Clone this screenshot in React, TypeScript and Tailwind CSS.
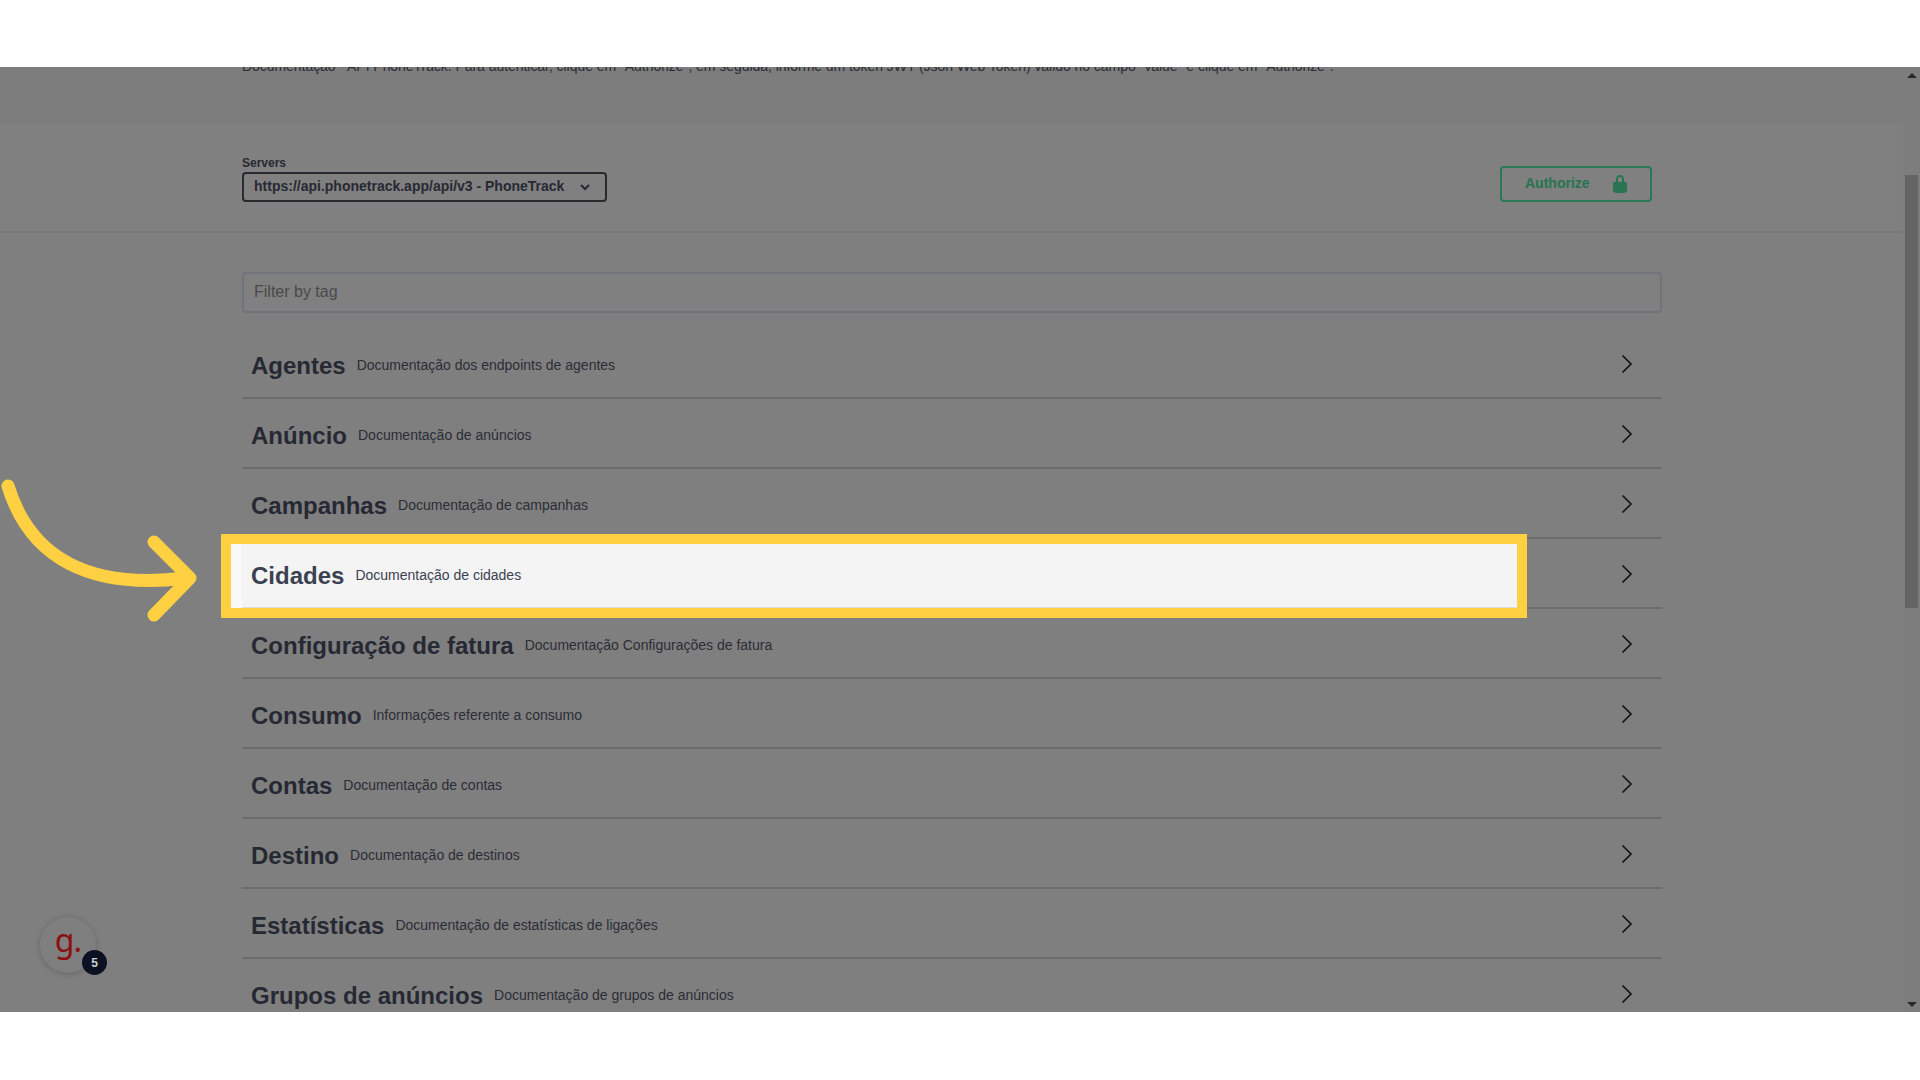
const tags = [
  { name: "Agentes", desc: "Documentação dos endpoints de agentes" },
  { name: "Anúncio", desc: "Documentação de anúncios" },
  { name: "Campanhas", desc: "Documentação de campanhas" },
  { name: "Cidades", desc: "Documentação de cidades", highlight: true },
  { name: "Configuração de fatura", desc: "Documentação Configurações de fatura" },
  { name: "Consumo", desc: "Informações referente a consumo" },
  { name: "Contas", desc: "Documentação de contas" },
  { name: "Destino", desc: "Documentação de destinos" },
  { name: "Estatísticas", desc: "Documentação de estatísticas de ligações" },
  { name: "Grupos de anúncios", desc: "Documentação de grupos de anúncios" },
];

function Chevron() {
  return (
    <svg width="12" height="20" viewBox="0 0 12 20" fill="none" className="mb-[3px] shrink-0">
      <path d="M1.5 1.5L10 10L1.5 18.5" stroke="#111" strokeWidth="1.6" />
    </svg>
  );
}

function TagTitle({ name, desc, bright }: { name: string; desc: string; bright?: boolean }) {
  return (
    <div className="flex items-center pl-[9px]">
      <span className={`text-[24px] font-bold leading-none ${bright ? "text-[#3b4151]" : "text-[#262933]"}`}>{name}</span>
      <span className={`ml-[11px] text-[14px] ${bright ? "text-[#3b4151]" : "text-[#2b2d36]"}`}>{desc}</span>
    </div>
  );
}

function TagRow({ name, desc, highlight }: { name: string; desc: string; highlight?: boolean }) {
  return (
    <div className="relative flex h-[70px] shrink-0 items-center justify-between border-b-2 border-[#6d6d6d] pt-[5px] pr-[29px]">
      {highlight ? <div /> : <TagTitle name={name} desc={desc} />}
      <Chevron />
      {highlight && (
        <div className="absolute left-[-21px] top-[-5px] flex h-[84px] w-[1306px] border-[10px] border-[#ffd041] bg-[#f4f4f4]">
          <div className="h-full w-[11px] bg-[#f9f9f9]" />
          <div className="flex flex-1 items-center border-b border-[#dcdcdc]">
            <TagTitle name={name} desc={desc} bright />
          </div>
        </div>
      )}
    </div>
  );
}

export default function App() {
  return (
    <div className="flex h-screen w-full flex-col overflow-hidden bg-white font-['Liberation_Sans',Arial,sans-serif]">
      <div className="h-[67px] shrink-0 bg-white" />

      <div className="relative flex min-h-0 flex-1 overflow-hidden bg-[#7f7f7f]">
        <div className="flex min-w-0 flex-1 flex-col">
          <div className="h-[56px] shrink-0 bg-[#7d7d7d] pl-[242px]">
            <p className="-mt-[9px] text-[14px] leading-[16px] tracking-[-0.05px] whitespace-nowrap text-[#2b2d36]">
              Documentação - API PhoneTrack. Para autenticar, clique em "Authorize", em seguida, informe um token JWT (Json Web Token) válido no campo "value" e clique em "Authorize".
            </p>
          </div>

          <div className="flex h-[110px] shrink-0 items-start justify-between border-b-2 border-[#787878] bg-[#808080] pl-[242px] pr-[251px]">
            <div className="pt-[33px]">
              <div className="text-[12px] leading-[14px] font-bold text-[#262933]">Servers</div>
              <div className="mt-[2px] flex h-[30px] w-[365px] items-center justify-between rounded-[4px] border-2 border-[#2a2a2e] pb-[1px] pl-[10px] pr-[14px]">
                <span className="text-[14px] font-bold whitespace-nowrap text-[#262933]">https://api.phonetrack.app/api/v3 - PhoneTrack</span>
                <svg width="12" height="12" viewBox="0 0 12 12" fill="none">
                  <path d="M2 4L6 8L10 4" stroke="#262933" strokeWidth="2" />
                </svg>
              </div>
            </div>
            <div className="mt-[43px] flex h-[36px] w-[152px] items-center justify-between rounded-[4px] border-2 border-[#277a54] pb-[1px] pl-[23px] pr-[20px]">
              <span className="text-[14px] font-bold text-[#267450]">Authorize</span>
              <svg width="20" height="20" viewBox="0 0 20 20" fill="#267450">
                <path d="M15.8 8H14V5.6C14 2.703 12.665 1 10 1 7.334 1 6 2.703 6 5.6V8H4c-.553 0-1 .646-1 1.199V17c0 .549.428 1.139.951 1.307l1.197.387C5.672 18.861 6.55 19 7.1 19h5.8c.549 0 1.428-.139 1.951-.307l1.196-.387c.524-.167.953-.757.953-1.306V9.199C17 8.646 16.352 8 15.8 8zM12 8H8V5.199C8 3.754 8.797 3 10 3c1.203 0 2 .754 2 2.199V8z" />
              </svg>
            </div>
          </div>

          <div className="ml-[242px] flex w-[1420px] flex-col pt-[39px]">
            <div className="flex h-[41px] items-center rounded-[4px] border-2 border-[#70747a] bg-[#808080] pb-[2px] pl-[10px] text-[16px] text-[#4a4a4a]">
              Filter by tag
            </div>
            <div className="mt-[16px] flex flex-col">
              {tags.map((t) => (
                <TagRow key={t.name} name={t.name} desc={t.desc} highlight={t.highlight} />
              ))}
            </div>
          </div>
        </div>

        <div className="flex w-[17px] shrink-0 flex-col items-center bg-[#7d7d7d] pt-[6px]">
          <div className="h-0 w-0 border-x-[5px] border-b-[5px] border-x-transparent border-b-[#2a2a2a]" />
          <div className="mt-[97px] h-[433px] w-[13px] bg-[#646464]" />
          <div className="mt-auto mb-[5px] h-0 w-0 border-x-[5px] border-t-[5px] border-x-transparent border-t-[#2a2a2a]" />
        </div>

        <svg width="210" height="150" viewBox="0 0 210 150" fill="none" className="absolute left-0 top-[405px]">
          <path d="M8 14C30 86 90 118 186 106" stroke="#ffd041" strokeWidth="13" strokeLinecap="round" />
          <path d="M154 70L190 106L154 143" stroke="#ffd041" strokeWidth="13" strokeLinecap="round" strokeLinejoin="round" />
        </svg>

        <div className="absolute left-[40px] top-[850px] flex h-[56px] w-[56px] items-center justify-center rounded-full bg-[#7f7f7f] shadow-[0_1px_6px_rgba(0,0,0,0.2)]">
          <span className="-mt-[10px] font-['Noto_Sans',sans-serif] text-[32px] leading-none tracking-[-1px] text-[#8a0f10]">g.</span>
          <div className="absolute left-[42px] top-[33px] flex h-[25px] w-[25px] items-center justify-center rounded-full bg-[#0b1120] text-[12px] font-bold text-[#c9ccd2]">5</div>
        </div>
      </div>

      <div className="h-[68px] shrink-0 bg-white" />
    </div>
  );
}
